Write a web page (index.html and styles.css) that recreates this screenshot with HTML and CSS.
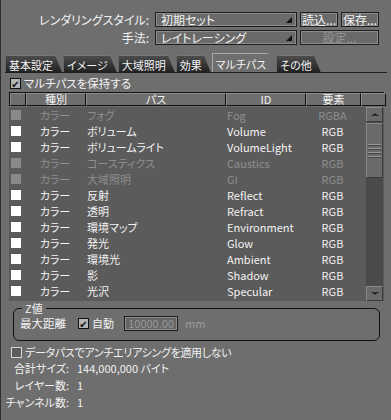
FILE: index.html
```html
<!DOCTYPE html>
<html lang="ja">
<head>
  <meta charset="UTF-8">
  <title>マルチパス</title>
  <link rel="stylesheet" href="styles.css">
</head>
<body>
  <div class="win">
    <div class="top">
      <div class="line">
        <span class="label">レンダリングスタイル:</span>
        <span class="select">初期セット</span>
        <span class="btn">読込...</span>
        <span class="btn">保存...</span>
      </div>
      <div class="line">
        <span class="label">手法:</span>
        <span class="select">レイトレーシング</span>
        <span class="btn wide off">設定...</span>
      </div>
    </div>

    <div class="tabs">
      <span class="tab">基本設定</span>
      <span class="tab">イメージ</span>
      <span class="tab">大域照明</span>
      <span class="tab">効果</span>
      <span class="tab on">マルチパス</span>
      <span class="tab">その他</span>
    </div>

    <label class="check keep"><span class="box ticked"></span>マルチパスを保持する</label>

    <div class="table">
      <div class="head">
        <span></span>
        <span>種別</span>
        <span>パス</span>
        <span>ID</span>
        <span>要素</span>
        <span></span>
      </div>
      <div class="body">
        <div class="rows">
          <div class="row dim"><span class="sq"></span><span>カラー</span><span>フォグ</span><span>Fog</span><span>RGBA</span></div>
          <div class="row"><span class="sq"></span><span>カラー</span><span>ボリューム</span><span>Volume</span><span>RGB</span></div>
          <div class="row"><span class="sq"></span><span>カラー</span><span>ボリュームライト</span><span>VolumeLight</span><span>RGB</span></div>
          <div class="row dim"><span class="sq"></span><span>カラー</span><span>コースティクス</span><span>Caustics</span><span>RGB</span></div>
          <div class="row dim"><span class="sq"></span><span>カラー</span><span>大域照明</span><span>GI</span><span>RGB</span></div>
          <div class="row"><span class="sq"></span><span>カラー</span><span>反射</span><span>Reflect</span><span>RGB</span></div>
          <div class="row"><span class="sq"></span><span>カラー</span><span>透明</span><span>Refract</span><span>RGB</span></div>
          <div class="row"><span class="sq"></span><span>カラー</span><span>環境マップ</span><span>Environment</span><span>RGB</span></div>
          <div class="row"><span class="sq"></span><span>カラー</span><span>発光</span><span>Glow</span><span>RGB</span></div>
          <div class="row"><span class="sq"></span><span>カラー</span><span>環境光</span><span>Ambient</span><span>RGB</span></div>
          <div class="row"><span class="sq"></span><span>カラー</span><span>影</span><span>Shadow</span><span>RGB</span></div>
          <div class="row"><span class="sq"></span><span>カラー</span><span>光沢</span><span>Specular</span><span>RGB</span></div>
        </div>
        <div class="scroll">
          <span class="arrow up"></span>
          <span class="thumb"><i></i><i></i><i></i><i></i></span>
          <span class="track"></span>
          <span class="arrow down"></span>
        </div>
      </div>
    </div>

    <fieldset class="group">
      <legend>Z値</legend>
      <div class="zrow">
        <span class="zlabel">最大距離</span>
        <label class="check"><span class="box ticked"></span>自動</label>
        <span class="field">10000.00</span>
        <span class="unit">mm</span>
      </div>
    </fieldset>

    <label class="check aa"><span class="box"></span>データパスでアンチエリアシングを適用しない</label>

    <div class="stats">
      <span class="k">合計サイズ:</span><span>144,000,000 バイト</span>
      <span class="k">レイヤー数:</span><span>1</span>
      <span class="k">チャンネル数:</span><span>1</span>
    </div>
  </div>
</body>
</html>
```

FILE: styles.css
```css
* {
  box-sizing: border-box;
}

body {
  margin: 0;
  background: #6e6e6e;
  color: #f2f2f2;
  font-family: "Noto Sans CJK JP", "DejaVu Sans", sans-serif;
  font-size: 11px;
  font-feature-settings: "palt";
  line-height: 1;
}

.win {
  width: 391px;
  height: 420px;
  border-left: 1px solid #2e2e2e;
  padding-top: 12px;
  overflow: hidden;
}

/* top selectors */
.top {
  display: flex;
  flex-direction: column;
  gap: 3px;
}

.line {
  display: flex;
  align-items: center;
  gap: 3px;
  height: 15px;
}

.label {
  width: 150px;
  text-align: right;
  padding-right: 2px;
  font-size: 12px;
}

.select,
.btn,
.field {
  height: 15px;
  border: 1px solid #1e1e1e;
  box-shadow: inset 0 0 0 1px #8c8c8c;
  background: #6a6a6a;
  display: flex;
  align-items: center;
}

.select {
  width: 142px;
  margin-left: 1px;
  padding-left: 5px;
  position: relative;
  font-size: 12px;
}

.select::after {
  content: "";
  position: absolute;
  right: 4px;
  bottom: 3px;
  border-left: 6px solid transparent;
  border-bottom: 6px solid #111;
}

.btn {
  width: 38px;
  justify-content: center;
  font-size: 12px;
}

.btn.wide {
  width: 79px;
}

.btn.off {
  color: #959595;
}

/* tabs */
.tabs {
  display: flex;
  align-items: flex-end;
  margin: 9px 4px 0 4px;
  height: 19px;
  border-bottom: 1px solid #1e1e1e;
}

.tab {
  height: 17px;
  padding: 2px 9px 0 3px;
  margin-right: 1px;
  background: linear-gradient(#4c4c4c, #222);
  border-top: 1px solid #777;
  border-left: 1px solid #666;
  clip-path: polygon(0 0, calc(100% - 7px) 0, 100% 100%, 0 100%);
  display: flex;
  align-items: center;
  font-size: 11px;
}

.tab.on {
  height: 19px;
  background: #6e6e6e;
  border-top: 1px solid #a8a8a8;
  border-left: 1px solid #a8a8a8;
}

/* checkboxes */
.check {
  display: flex;
  align-items: center;
  gap: 3px;
}

.box {
  width: 11px;
  height: 11px;
  border: 1px solid #d8d8d8;
  background: #5c5c5c;
  display: flex;
  align-items: center;
  justify-content: center;
  font-size: 10px;
}

.box.ticked {
  border-color: #111;
  background: #b4b4b4;
  color: #111;
}

.box.ticked::before {
  content: "✔";
  line-height: 1;
}

.keep {
  margin: 4px 0 0 9px;
  height: 13px;
  font-size: 11.5px;
}

/* multipass table */
.table {
  margin: 2px 7px 0 8px;
}

.head {
  display: grid;
  grid-template-columns: 16px 60px 140px 80px 55px 25px;
  height: 14px;
  background: #2a2a2a;
  border: 1px solid #111;
}

.head span {
  background: #6e6e6e;
  border: 1px solid #111;
  border-top-color: #8e8e8e;
  border-left-color: #8e8e8e;
  text-align: center;
  font-size: 11px;
  line-height: 11px;
}

.body {
  display: flex;
  height: 194px;
  margin-top: 1px;
  background: #5b5b5b;
}

.rows {
  flex: 1;
}

.row {
  display: grid;
  grid-template-columns: 16px 60px 140px 80px 55px;
  height: 16px;
  align-items: center;
}

.row span:nth-child(2),
.row span:nth-child(5) {
  text-align: center;
}

.row span:nth-child(3),
.row span:nth-child(4) {
  padding-left: 2px;
}

.sq {
  width: 10px;
  height: 10px;
  margin-left: 2px;
  background: #fff;
}

.row.dim {
  color: #8e8e8e;
}

.row.dim .sq {
  background: #8a8a8a;
}

.scroll {
  width: 17px;
  margin-right: 1px;
  display: flex;
  flex-direction: column;
  background: #4a4a4a;
}

.arrow,
.thumb {
  background: #6a6a6a;
  border: 1px solid #888;
  border-right-color: #3a3a3a;
  border-bottom-color: #3a3a3a;
}

.arrow {
  height: 15px;
  position: relative;
}

.arrow::after {
  content: "";
  position: absolute;
  left: 4px;
  top: 5px;
  border-left: 4px solid transparent;
  border-right: 4px solid transparent;
}

.up::after {
  border-bottom: 3px solid #2a2a2a;
}

.down::after {
  border-top: 3px solid #2a2a2a;
}

.thumb {
  height: 55px;
  margin-top: 1px;
  display: flex;
  flex-direction: column;
  justify-content: center;
  gap: 2px;
  padding: 0 1px;
}

.thumb i {
  background: #999;
  border-bottom: 1px solid #444;
  height: 2px;
}

.track {
  flex: 1;
}

/* Z value group */
.group {
  margin: 2px 11px 0 12px;
  padding: 6px;
  height: 38px;
  border: 1px solid #111;
  border-radius: 6px;
}

.group legend {
  padding: 0 3px;
  margin-left: 2px;
  font-size: 11px;
}

.zrow {
  display: flex;
  align-items: center;
  margin-top: -4px;
}

.zlabel {
  width: 58px;
  font-size: 11.5px;
}

.field {
  width: 54px;
  margin-left: 10px;
  justify-content: flex-end;
  padding-right: 3px;
  color: #9a9a9a;
  background: #666;
}

.unit {
  margin-left: 7px;
  color: #9a9a9a;
}

.aa {
  margin: 6px 0 0 10px;
  letter-spacing: -0.3px;
}

.stats {
  display: grid;
  grid-template-columns: 68px auto;
  column-gap: 8px;
  row-gap: 6px;
  margin-top: 5px;
}

.stats .k {
  text-align: right;
}
```
